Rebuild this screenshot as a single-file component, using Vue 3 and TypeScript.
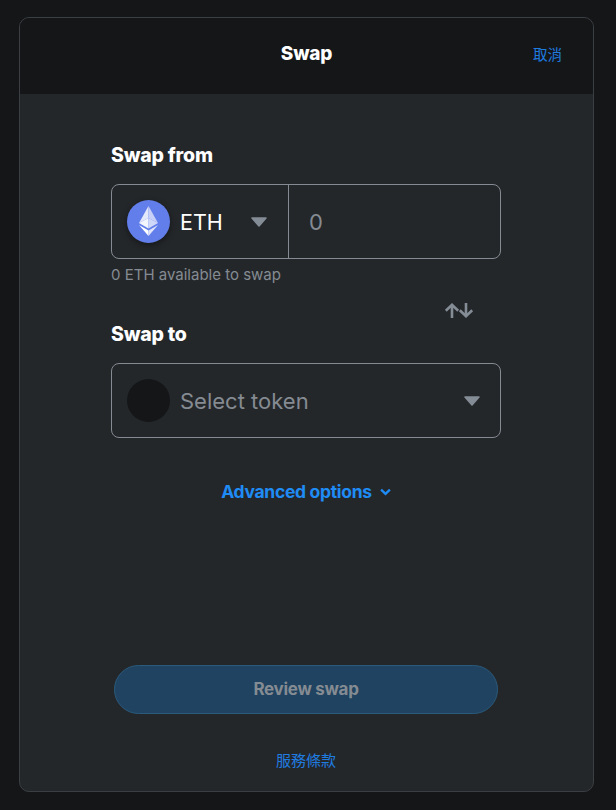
<script setup lang="ts">
const title: string = 'Swap'
</script>

<template>
  <div class="page">
    <main class="card">
      <header class="head">
        <h1 class="title">{{ title }}</h1>
        <a class="cancel">取消</a>
      </header>
      <section class="body">
        <div class="form">
          <h2 class="label">Swap from</h2>
          <div class="box">
            <div class="token-cell">
              <span class="eth">
                <svg viewBox="0 0 43 43" width="43" height="43">
                  <path d="M21.500 6 L21.500 18 L12 23 Z" fill="#e4e8fb" />
                  <path d="M21.500 6 L31 23 L21.500 18 Z" fill="#c7d0f7" />
                  <path d="M12 23 L21.500 18 L21.500 28.500 Z" fill="#f4f6fe" />
                  <path d="M31 23 L21.500 18 L21.500 28.500 Z" fill="#d0d8f9" />
                  <path d="M12 25 L21.500 30.500 L21.500 36 Z" fill="#fff" />
                  <path d="M31 25 L21.500 30.500 L21.500 36 Z" fill="#dfe4fb" />
                </svg>
              </span>
              <span class="sym">ETH</span>
              <svg class="caret caret-from" viewBox="0 0 18 10" width="18" height="10">
                <path d="M2 1 H16 L9 9 Z" fill="#848c96" stroke="#848c96" stroke-width="1.500" stroke-linejoin="round" />
              </svg>
            </div>
            <div class="amount">0</div>
          </div>
          <p class="hint">0 ETH available to swap</p>
          <div class="switch-row">
            <svg class="switch" viewBox="0 0 30 15" width="30" height="15" fill="none" stroke="#848c96" stroke-width="2.600">
              <path d="M8 15 V2 M1.800 7.800 L8 1.800 L14.200 7.800" />
              <path d="M22 0 V13 M15.800 7.200 L22 13.200 L28.200 7.200" />
            </svg>
          </div>
          <h2 class="label label-to">Swap to</h2>
          <div class="box box-to">
            <span class="blank"></span>
            <span class="placeholder">Select token</span>
            <svg class="caret caret-to" viewBox="0 0 18 10" width="18" height="10">
              <path d="M2 1 H16 L9 9 Z" fill="#848c96" stroke="#848c96" stroke-width="1.500" stroke-linejoin="round" />
            </svg>
          </div>
          <div class="advanced">
            <span>Advanced options</span>
            <svg viewBox="0 0 12 8" width="11" height="8" fill="none" stroke="#1f8cf5" stroke-width="2.600">
              <path d="M1.200 1.500 L6 6 L10.800 1.500" />
            </svg>
          </div>
        </div>
        <button class="review" type="button"><span>Review swap</span></button>
        <a class="terms">服務條款</a>
      </section>
    </main>
  </div>
</template>

<style>
html, body { margin: 0; background: #141618; }
</style>

<style scoped>
.page {
  width: 616px;
  height: 810px;
  box-sizing: border-box;
  padding: 17px 22px 18px 19px;
  background: #141618;
  font-family: Inter, "Noto Sans CJK TC", sans-serif;
}
.card {
  height: 775px;
  box-sizing: border-box;
  display: flex;
  flex-direction: column;
  border: 1px solid #3b3e42;
  border-radius: 10px;
  overflow: hidden;
  background: #24272a;
}
.head {
  flex: 0 0 76px;
  display: flex;
  align-items: center;
  justify-content: center;
  position: relative;
  background: #141618;
}
.title {
  margin: 0 0 5px;
  font-size: 19px;
  font-weight: 800;
  letter-spacing: -0.2px;
  color: #fff;
}
.cancel {
  position: absolute;
  right: 31px;
  top: 26px;
  font: 14.500px/20px "Noto Sans CJK TC", sans-serif;
  color: #1f7ce0;
}
.body {
  flex: 1;
  display: flex;
  flex-direction: column;
  align-items: center;
  padding-right: 1px;
}
.form {
  width: 390px;
  height: 571px;
  padding-top: 50px;
  box-sizing: border-box;
}
.label {
  margin: 0;
  font-size: 19.500px;
  line-height: 22px;
  font-weight: 800;
  letter-spacing: -0.2px;
  color: #fff;
}
.box {
  margin-top: 18px;
  height: 75px;
  box-sizing: border-box;
  display: flex;
  border: 1px solid #858b92;
  border-radius: 8px;
}
.token-cell {
  width: 177px;
  box-sizing: border-box;
  display: flex;
  align-items: center;
  padding-left: 15px;
  border-right: 1px solid #858b92;
}
.eth {
  width: 43px;
  height: 43px;
  flex: none;
  border-radius: 50%;
  background: #627eea;
  box-shadow: 0 2px 6px rgba(0, 0, 0, 0.45);
}
.eth svg { display: block; }
.sym {
  margin-left: 10px;
  font-size: 21.500px;
  color: #fff;
}
.caret { flex: none; }
.caret-from { margin-left: 27px; }
.caret-to { margin-left: auto; margin-right: 19px; }
.amount {
  padding-left: 20px;
  align-self: center;
  font-size: 22px;
  color: #858b92;
}
.hint {
  margin: 6px 0 0;
  font-size: 15px;
  line-height: 20px;
  color: #858b92;
}
.switch-row {
  height: 24px;
  display: flex;
  justify-content: flex-end;
  padding-right: 27px;
}
.switch { margin-top: 18px; flex: none; }
.label-to { margin-top: 14px; }
.box-to {
  align-items: center;
  padding-left: 15px;
}
.blank {
  width: 43px;
  height: 43px;
  flex: none;
  border-radius: 50%;
  background: #141618;
}
.placeholder {
  margin-left: 10px;
  font-size: 22px;
  color: #858b92;
}
.advanced {
  margin-top: 43px;
  display: flex;
  align-items: center;
  justify-content: center;
  gap: 8px;
  font-size: 17.500px;
  line-height: 22px;
  font-weight: 700;
  letter-spacing: -0.3px;
  color: #1f8cf5;
}
.review {
  width: 384px;
  height: 49px;
  padding: 0 0 2px;
  box-sizing: border-box;
  border: 1px solid #2b5a7c;
  border-radius: 25px;
  background: #1f4360;
  font-family: Inter, sans-serif;
  font-size: 17px;
  font-weight: 700;
  letter-spacing: -0.3px;
  color: #858b92;
}
.terms {
  margin-top: 36px;
  font: 15px/20px "Noto Sans CJK TC", sans-serif;
  color: #1f7ce0;
}
</style>
